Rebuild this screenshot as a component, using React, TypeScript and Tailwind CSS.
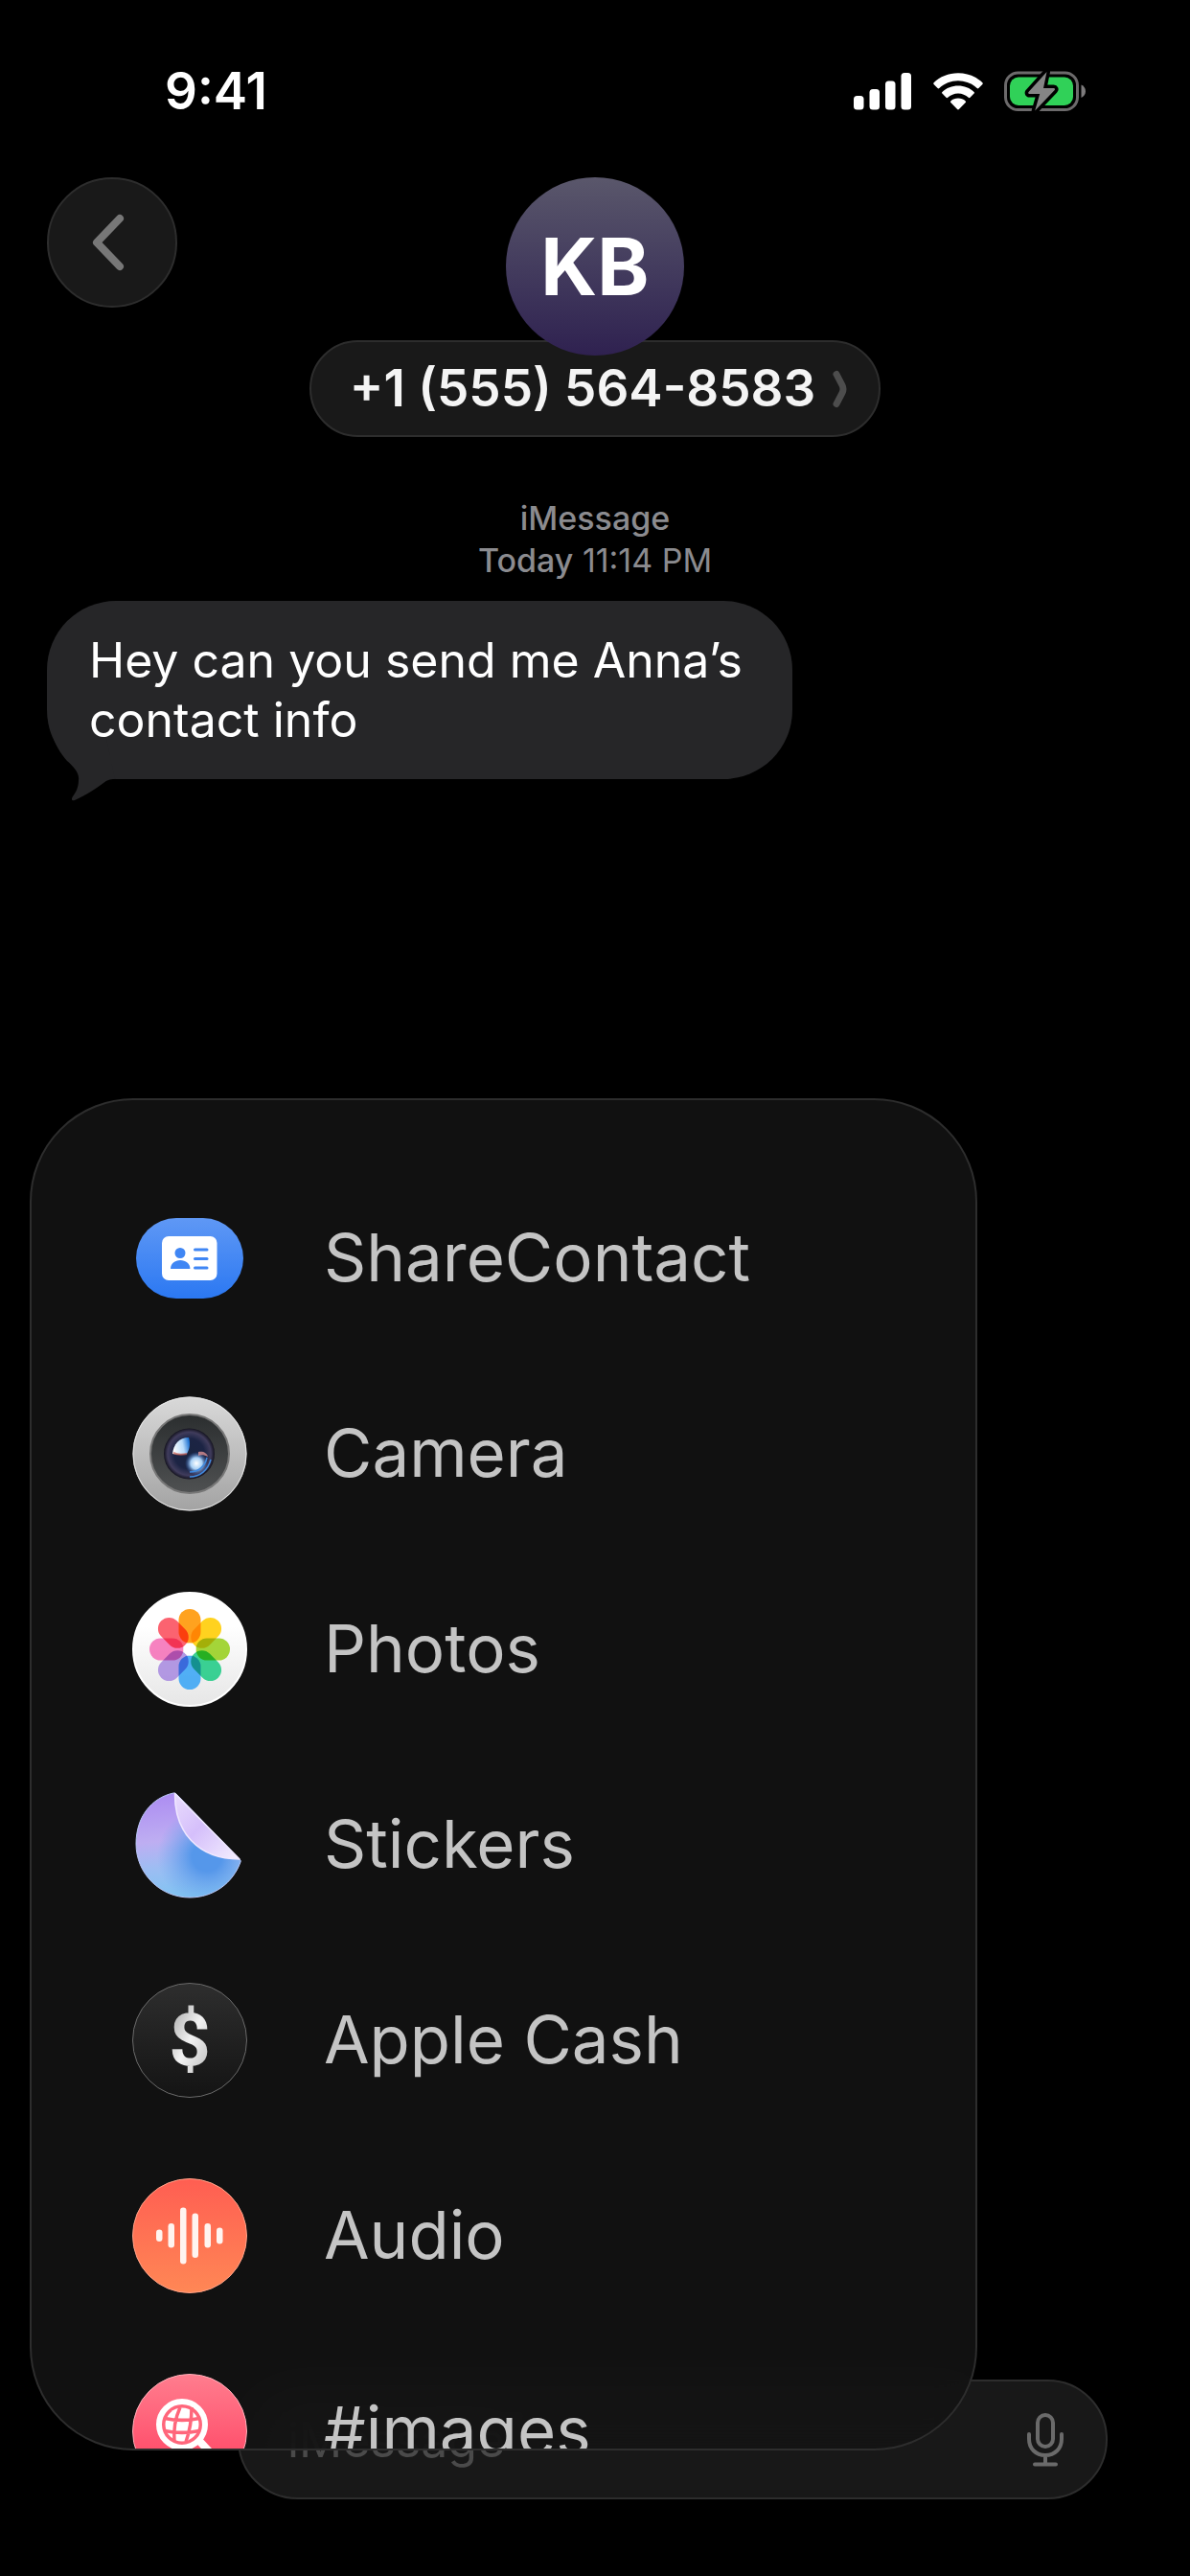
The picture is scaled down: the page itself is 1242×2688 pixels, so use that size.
import { useState } from "react";
import type { ReactNode } from "react";

interface MenuItem {
  label: string;
  icon: ReactNode;
}

function SignalIcon() {
  return (
    <svg className="w-[61px] h-10" viewBox="0 0 61 40" fill="#fff">
      <rect x="0" y="25" width="10.5" height="14.5" rx="3.5" />
      <rect x="16.5" y="18" width="10.5" height="21.5" rx="3.5" />
      <rect x="33" y="9.5" width="10.5" height="30" rx="3.5" />
      <rect x="49.5" y="1" width="10.5" height="38.5" rx="3.5" />
    </svg>
  );
}

function WifiIcon() {
  return (
    <svg className="w-[52px] h-10" viewBox="0 0 52 40" fill="#fff">
      <path d="M26 1.2C16 1.2 7 5 .6 11.2c-.5.5-.5 1.2 0 1.7l4 4.1c.5.5 1.2.5 1.7 0C11.5 12 18.4 9.2 26 9.2s14.5 2.8 19.7 7.8c.5.5 1.2.5 1.7 0l4-4.1c.5-.5.5-1.2 0-1.7C45 5 36 1.2 26 1.2Z" />
      <path d="M26 14.5c-6.4 0-12.2 2.4-16.6 6.4-.5.5-.5 1.2 0 1.7l4.1 4.2c.5.5 1.2.5 1.7 0 2.900-2.600 6.700-4.200 10.800-4.200s7.900 1.600 10.800 4.200c.5.5 1.2.5 1.700 0l4.100-4.200c.5-.5.5-1.200 0-1.700-4.400-4-10.200-6.400-16.600-6.400Z" />
      <path d="M26 27.6c-2.900 0-5.600 1-7.700 2.800-.5.5-.5 1.200 0 1.700l6.800 7c.5.5 1.300.5 1.800 0l6.800-7c.5-.5.5-1.200 0-1.700-2.100-1.800-4.800-2.800-7.700-2.800Z" />
    </svg>
  );
}

function BatteryIcon() {
  return (
    <svg className="w-[86px] h-[44px]" viewBox="0 0 86 44">
      <rect x="1.5" y="3" width="75" height="38.5" rx="13" fill="none" stroke="#6c6a6b" strokeWidth="3" />
      <rect x="6" y="7.5" width="66" height="29.5" rx="9" fill="#30d158" />
      <path d="M80.5 15.5c2.8 1.1 4.5 3.7 4.5 6.7s-1.7 5.6-4.5 6.7Z" fill="#7d7b7c" />
      <path
        d="M44.5 2 25.5 23c-.7.9-.3 2 .9 2h10.800l-5 17.500L52.700 21c.8-.9.3-2-.9-2H41Z"
        fill="#858585"
        stroke="#000"
        strokeWidth="7"
        strokeLinejoin="round"
        paintOrder="stroke"
      />
    </svg>
  );
}

function ShareContactIcon() {
  return (
    <svg className="w-[112px] h-[84px]" viewBox="0 0 112 84">
      <defs>
        <linearGradient id="contactBg" x1="0" y1="0" x2="0" y2="1">
          <stop offset="0" stopColor="#5f98f5" />
          <stop offset="1" stopColor="#2b78f2" />
        </linearGradient>
      </defs>
      <rect width="112" height="84" rx="42" fill="url(#contactBg)" />
      <rect x="27" y="19" width="57.5" height="46" rx="7" fill="#fff" />
      <g fill="#3f86f4">
        <circle cx="46" cy="36.5" r="5.5" />
        <path d="M36 53c0-5.5 4.5-9 10.2-9s10.2 3.5 10.2 9Z" />
        <rect x="60" y="31.5" width="15.5" height="3" rx="1.5" />
        <rect x="60" y="41" width="15.5" height="3" rx="1.5" />
        <rect x="60" y="50.5" width="15.5" height="3" rx="1.5" />
      </g>
    </svg>
  );
}

function CameraIcon() {
  return (
    <svg className="size-[120px]" viewBox="0 0 120 120">
      <defs>
        <linearGradient id="camBody" x1="0" y1="0" x2="0" y2="1">
          <stop offset="0" stopColor="#d9d9d9" />
          <stop offset="1" stopColor="#a3a3a3" />
        </linearGradient>
        <linearGradient id="camRing" x1="0" y1="0" x2="0" y2="1">
          <stop offset="0" stopColor="#2b2e2f" />
          <stop offset="1" stopColor="#4f5152" />
        </linearGradient>
        <radialGradient id="camLens">
          <stop offset="0" stopColor="#1a2440" />
          <stop offset="0.6" stopColor="#1c2444" />
          <stop offset="0.85" stopColor="#403c5c" />
          <stop offset="1" stopColor="#14131f" />
        </radialGradient>
        <linearGradient id="camShineA" x1="0" y1="0.6" x2="1" y2="0.4">
          <stop offset="0" stopColor="#fff" />
          <stop offset="0.6" stopColor="#b9dcfb" />
          <stop offset="1" stopColor="#1b6fd0" />
        </linearGradient>
        <radialGradient id="camShineB">
          <stop offset="0" stopColor="#fff" />
          <stop offset="0.5" stopColor="#a7cff5" />
          <stop offset="1" stopColor="#2a5fb5" stopOpacity="0" />
        </radialGradient>
      </defs>
      <circle cx="60" cy="60" r="59.5" fill="url(#camBody)" />
      <circle cx="60" cy="60" r="59" fill="none" stroke="#e6e6e6" />
      <circle cx="60" cy="60" r="41" fill="url(#camRing)" stroke="#777" strokeWidth="2" />
      <circle cx="59.5" cy="60" r="26.5" fill="url(#camLens)" />
      <path d="M42 60c1-10 7-17 17-17 2 6 1 12-2 17-5 1-10 1-15 0Z" fill="url(#camShineA)" />
      <path d="M43 59c4 2 9 2 14 1" stroke="#c4584d" strokeWidth="2" fill="none" opacity="0.7" />
      <circle cx="67" cy="70" r="12" fill="url(#camShineB)" />
      <path d="M69 58c5-1 9 1 10 5-4-2-7-2-10-1Z" fill="#d98f92" opacity="0.8" />
      <path d="M60 79c9 0 16-6 18-15M60 84c11 0 19-7 22-18" stroke="#3f8ae0" strokeWidth="1.5" fill="none" />
    </svg>
  );
}

const petals = [
  { color: "#ff9500", angle: 0 },
  { color: "#ffcc00", angle: 45 },
  { color: "#97cf1d", angle: 90 },
  { color: "#1fcb85", angle: 135 },
  { color: "#3aa5f5", angle: 180 },
  { color: "#a98be0", angle: 225 },
  { color: "#f571b8", angle: 270 },
  { color: "#fb4d5c", angle: 315 },
];

function PhotosIcon() {
  return (
    <svg className="size-[120px]" viewBox="0 0 120 120">
      <defs>
        <linearGradient id="photosBg" x1="0" y1="0" x2="0" y2="1">
          <stop offset="0.3" stopColor="#fff" />
          <stop offset="1" stopColor="#e6e6e6" />
        </linearGradient>
      </defs>
      <circle cx="60" cy="60" r="59" fill="url(#photosBg)" stroke="#fff" strokeWidth="2" />
      <g className="isolate">
        {petals.map((p) => (
          <rect
            key={p.angle}
            className="mix-blend-multiply"
            x="48.5"
            y="18"
            width="23"
            height="35.5"
            rx="11.5"
            fill={p.color}
            opacity="0.88"
            transform={`rotate(${p.angle} 60 60)`}
          />
        ))}
      </g>
      <circle cx="60" cy="60" r="6.5" fill="#fff" />
    </svg>
  );
}

const stickerOutline =
  "M43 6C20 11 4 31 4 59c0 31 25 56 56 56 25 0 45-15 53-37 .5-1.5 0-2-1-3L46 7c-1-1-2-1.3-3-1Z";

function StickersIcon() {
  return (
    <svg className="size-[120px]" viewBox="0 0 120 120">
      <defs>
        <linearGradient id="stickerBase" x1="0.3" y1="0" x2="0.4" y2="1">
          <stop offset="0" stopColor="#ac8cf2" />
          <stop offset="0.45" stopColor="#beaef2" />
          <stop offset="0.7" stopColor="#9dbdf3" />
          <stop offset="1" stopColor="#80c4f2" />
        </linearGradient>
        <radialGradient id="stickerShade" gradientUnits="userSpaceOnUse" cx="78" cy="72" r="52">
          <stop offset="0.3" stopColor="#5597ea" />
          <stop offset="1" stopColor="#6fa6ee" stopOpacity="0" />
        </radialGradient>
        <linearGradient id="stickerFold" x1="0" y1="0" x2="1" y2="1">
          <stop offset="0" stopColor="#e9dcfd" />
          <stop offset="0.45" stopColor="#d5bffb" />
          <stop offset="1" stopColor="#f4effe" />
        </linearGradient>
      </defs>
      <path d={stickerOutline} fill="url(#stickerBase)" />
      <path d={stickerOutline} fill="url(#stickerShade)" stroke="#b9c6f6" strokeWidth="1" />
      <path d="M44.5 6.5C44 46 68 75 112 75Z" fill="url(#stickerFold)" stroke="#f0e8ff" strokeWidth="1.5" strokeLinejoin="round" />
    </svg>
  );
}

function CashIcon() {
  return (
    <span className="flex size-[120px] items-center justify-center rounded-full border border-[#6a6a6a] bg-linear-to-b from-[#2e2e2e] to-[#141414]">
      <span className="bg-linear-to-br from-[#9a9a9a] via-[#f2f2f2] to-[#b4b4b4] bg-clip-text font-['Roboto',sans-serif] text-[76px] leading-[88px] font-bold text-transparent">
        $
      </span>
    </span>
  );
}

function AudioIcon() {
  return (
    <svg className="size-[120px]" viewBox="0 0 120 120">
      <defs>
        <linearGradient id="audioBg" x1="0" y1="0" x2="0" y2="1">
          <stop offset="0" stopColor="#ff5e52" />
          <stop offset="1" stopColor="#ff8755" />
        </linearGradient>
      </defs>
      <circle cx="60" cy="60" r="59.5" fill="url(#audioBg)" stroke="#ffa288" />
      <g fill="#fff4f0">
        <rect x="25" y="53.5" width="6.5" height="12.5" rx="3.25" />
        <rect x="37.5" y="47" width="6.5" height="25.5" rx="3.25" />
        <rect x="50" y="30.5" width="6.5" height="59" rx="3.25" />
        <rect x="62.5" y="36.5" width="6.5" height="46.5" rx="3.25" />
        <rect x="75.500" y="47" width="6.5" height="25.5" rx="3.25" />
        <rect x="88" y="51.5" width="6.5" height="17" rx="3.25" />
      </g>
    </svg>
  );
}

function ImagesIcon() {
  return (
    <svg className="size-[120px]" viewBox="0 0 120 120">
      <defs>
        <linearGradient id="imagesBg" x1="0" y1="0" x2="0" y2="1">
          <stop offset="0" stopColor="#ff7d8e" />
          <stop offset="1" stopColor="#ff3b5c" />
        </linearGradient>
      </defs>
      <circle cx="60" cy="60" r="59.5" fill="url(#imagesBg)" stroke="#ffb0ba" />
      <path d="m70 70 28 30" stroke="#fff" strokeWidth="8" strokeLinecap="round" />
      <circle cx="52" cy="53" r="24" fill="#ff667b" stroke="#fff" strokeWidth="6" />
      <circle cx="52" cy="53" r="17.5" fill="#fff" />
      <path
        d="M34 46.500c12 2.500 24 2.500 36 0M34 59.500c12 2.500 24 2.500 36 0M50 35c-5 11-7 24-6 36M62 35c0 12-2 25-6 36"
        stroke="#ff667b"
        strokeWidth="3.500"
        fill="none"
      />
    </svg>
  );
}

const menuItems: MenuItem[] = [
  { label: "ShareContact", icon: <ShareContactIcon /> },
  { label: "Camera", icon: <CameraIcon /> },
  { label: "Photos", icon: <PhotosIcon /> },
  { label: "Stickers", icon: <StickersIcon /> },
  { label: "Apple Cash", icon: <CashIcon /> },
  { label: "Audio", icon: <AudioIcon /> },
  { label: "#images", icon: <ImagesIcon /> },
];

export default function App() {
  const [draft, setDraft] = useState("");

  return (
    <div className="relative flex min-h-screen flex-col overflow-hidden bg-black font-['Inter',sans-serif] text-white">
      {/* Status bar */}
      <div className="flex items-center justify-between pt-16 pr-[108px] pl-[172px]">
        <span className="text-[53px] leading-[62px] font-semibold">9:41</span>
        <div className="flex items-center gap-[22px]">
          <SignalIcon />
          <WifiIcon />
          <BatteryIcon />
        </div>
      </div>

      {/* Conversation header */}
      <header className="mt-[59px] grid grid-cols-[1fr_auto_1fr] items-start px-[49px]">
        <button
          aria-label="Back"
          className="flex size-[136px] items-center justify-center rounded-full border-2 border-[#2d2d2d] bg-[#191919]"
        >
          <svg className="mr-2 h-[60px] w-9" viewBox="0 0 36 60" fill="none">
            <path d="M30 5 6 30l24 25" stroke="#777" strokeWidth="8" strokeLinecap="round" strokeLinejoin="round" />
          </svg>
        </button>

        <div className="flex flex-col items-center">
          <div className="z-10 -mb-4 flex size-[186px] items-center justify-center rounded-full bg-linear-to-b from-[#5a576b] to-[#2f2150] text-[82px] font-bold">
            KB
          </div>
          <button className="flex h-[101px] items-center gap-[18px] rounded-full border-2 border-[#2d2d2d] bg-[#191919] pr-8 pl-10 text-[53px] font-semibold text-[#f4f4f4]">
            +1 (555) 564-8583
            <svg className="h-10 w-4" viewBox="0 0 16 40" fill="none">
              <path d="M4 4.5 10 16q2 4 0 8L4 35.5" stroke="#4d4d4d" strokeWidth="7" strokeLinecap="round" strokeLinejoin="round" />
            </svg>
          </button>
        </div>
      </header>

      {/* Messages */}
      <main className="mt-[63px] px-[49px]">
        <div className="text-center text-[34px] leading-[44px] text-[#8b8b8f]">
          <p className="font-medium">iMessage</p>
          <p>
            <span className="font-medium">Today</span> 11:14 PM
          </p>
        </div>

        <div className="relative mt-5 w-[68%] rounded-[72px] bg-[#262628] py-[31px] pr-9 pl-11 text-[50px] leading-[62px]">
          <svg className="absolute -bottom-[23px] left-0 h-[75px] w-[75px]" viewBox="0 0 75 75" fill="#262628">
            <path d="M4 0c4 16 10 25 17 33 8 7 13 13 12 20 0 8-3 13-6 17-2 3-1 5 2 4 13-6 22-12 30-18 4-3 6-4 12-4L60 0Z" />
          </svg>
          <p className="relative">Hey can you send me Anna’s contact info</p>
        </div>
      </main>

      {/* Composer */}
      <footer className="mt-auto pr-[86px] pb-20 pl-[248px]">
        <div className="flex h-[125px] items-center justify-between rounded-full border-2 border-[#2d2d2d] bg-[#181818] pr-11 pl-[50px]">
          <input
            type="text"
            aria-label="iMessage"
            placeholder="iMessage"
            value={draft}
            onChange={(e) => setDraft(e.target.value)}
            className="min-w-0 flex-1 bg-transparent text-[50px] leading-[62px] outline-none placeholder:text-[#4a4a4a]"
          />
          <button aria-label="Dictate">
            <svg className="h-14 w-[38px]" viewBox="0 0 38 56" fill="none" stroke="#6a6a6a" strokeWidth="4" strokeLinecap="round">
              <rect x="11" y="2" width="16" height="33" rx="8" />
              <path d="M2 22v5c0 10 7 17 17 17s17-7 17-17v-5M19 44v9M8 53.5h22" />
            </svg>
          </button>
        </div>
      </footer>

      {/* Attachment menu, floats over the composer */}
      <div className="absolute bottom-[131px] left-[31px] max-h-[1411px] w-[80%] max-w-[989px] overflow-hidden rounded-[108px] border-2 border-[#2d2d2d] bg-[#131313]/88 pt-[63px] backdrop-blur-[24px]">
        {menuItems.map((item) => (
          <button
            key={item.label}
            className="flex h-[204px] w-full items-center gap-20 pl-[105px] text-left text-[69px] text-[#c4c4c4]"
          >
            <span className="flex w-[120px] shrink-0 justify-center">{item.icon}</span>
            {item.label}
          </button>
        ))}
      </div>
    </div>
  );
}
